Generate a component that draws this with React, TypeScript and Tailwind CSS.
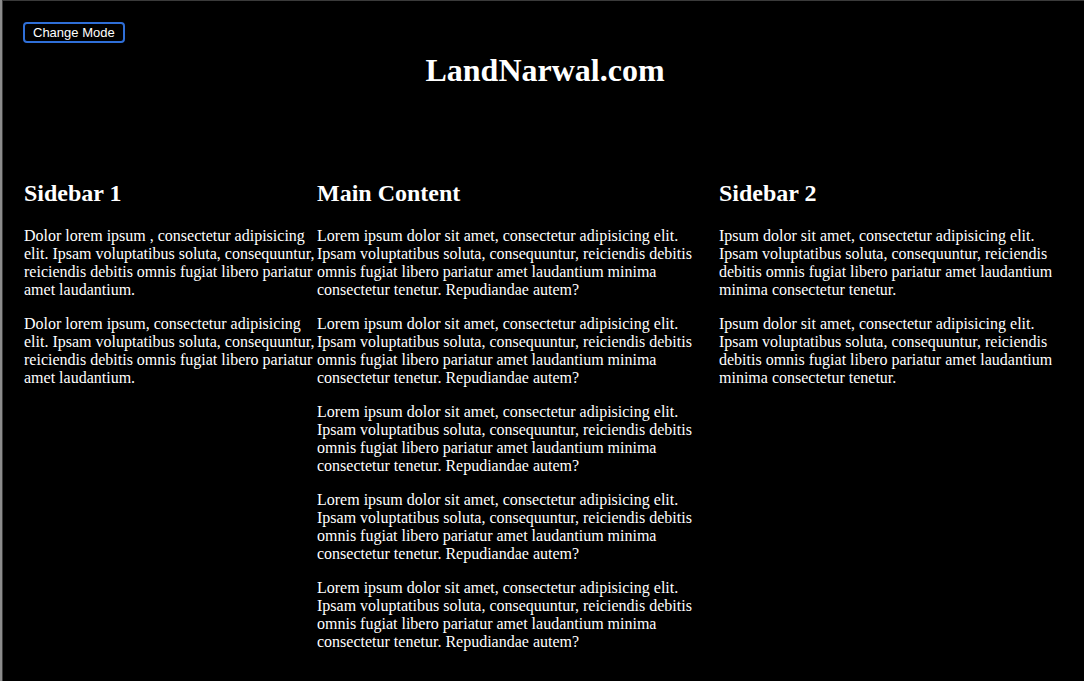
import React, { useState } from 'react';

const mainText =
  'Lorem ipsum dolor sit amet, consectetur adipisicing elit. Ipsam voluptatibus soluta, consequuntur, reiciendis debitis omnis fugiat libero pariatur amet laudantium minima consectetur tenetur. Repudiandae autem?';

const sideOne = [
  'Dolor lorem ipsum , consectetur adipisicing elit. Ipsam voluptatibus soluta, consequuntur, reiciendis debitis omnis fugiat libero pariatur amet laudantium.',
  'Dolor lorem ipsum, consectetur adipisicing elit. Ipsam voluptatibus soluta, consequuntur, reiciendis debitis omnis fugiat libero pariatur amet laudantium.',
];

const sideTwo = [
  'Ipsum dolor sit amet, consectetur adipisicing elit. Ipsam voluptatibus soluta, consequuntur, reiciendis debitis omnis fugiat libero pariatur amet laudantium minima consectetur tenetur.',
  'Ipsum dolor sit amet, consectetur adipisicing elit. Ipsam voluptatibus soluta, consequuntur, reiciendis debitis omnis fugiat libero pariatur amet laudantium minima consectetur tenetur.',
];

const Column: React.FC<{ title: string; paragraphs: string[]; className: string; dark: boolean }> = ({
  title,
  paragraphs,
  className,
  dark,
}) => (
  <section className={className}>
    <h2 className="text-[24px] leading-[27px] font-bold">{title}</h2>
    <div className="mt-[20px] flex flex-col gap-4">
      {paragraphs.map((p, i) => (
        <p key={i} className={`text-[16px] leading-[18px] ${dark ? 'text-white' : 'text-black'}`}>
          {p}
        </p>
      ))}
    </div>
  </section>
);

export default function App() {
  const [dark, setDark] = useState(true);

  return (
    <div
      className={`w-full h-[681px] overflow-hidden flex font-['Liberation_Serif','Times_New_Roman',serif] ${
        dark ? 'bg-black text-white' : 'bg-white text-black'
      }`}
    >
      {/* window edge */}
      <div className="w-[3px] shrink-0 bg-[#8c8c8c] border-r border-[#3a3a3a]" />

      <div className="flex-1 flex flex-col border-t border-[#3a3a3a] pl-[21px] pr-[24px]">
        <div className="pt-[19px]">
          <button
            onClick={() => setDark(!dark)}
            className="-ml-[1px] h-[21px] px-[8px] rounded-[4px] border-2 border-[#2f6fd8] bg-black text-white text-[13px] leading-none font-['Liberation_Sans',Arial,sans-serif]"
          >
            Change Mode
          </button>
        </div>

        {/* Header */}
        <h1 className="mt-[8px] ml-[6px] text-center text-[32px] leading-[37px] font-bold">LandNarwal.com</h1>

        {/* Columns */}
        <div className="mt-[91px] flex">
          <Column title="Sidebar 1" paragraphs={sideOne} className="w-[293px] shrink-0" dark={dark} />
          <Column
            title="Main Content"
            paragraphs={[mainText, mainText, mainText, mainText, mainText]}
            className="w-[402px] shrink-0"
            dark={dark}
          />
          <Column title="Sidebar 2" paragraphs={sideTwo} className="flex-1" dark={dark} />
        </div>
      </div>
    </div>
  );
}
